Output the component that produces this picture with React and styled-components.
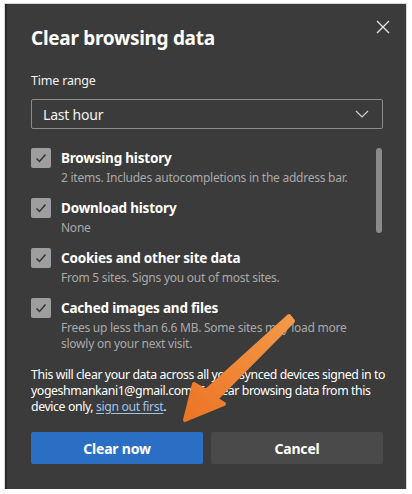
import React from "react";
import styled, { createGlobalStyle } from "styled-components";

const items = [
  { title: "Browsing history", desc: "2 items. Includes autocompletions in the address bar." },
  { title: "Download history", desc: "None" },
  { title: "Cookies and other site data", desc: "From 5 sites. Signs you out of most sites." },
  {
    title: "Cached images and files",
    desc: "Frees up less than 6.6 MB. Some sites may load more slowly on your next visit.",
  },
];

const Check = () => (
  <svg width="14" height="14" viewBox="0 0 14 14">
    <path d="M2.5 7.5 L5.5 10.5 L11.5 3.5" fill="none" stroke="#333" strokeWidth="1.5" />
  </svg>
);

const App = () => {
  return (
    <>
      <GlobalStyle />
      <Dialog>
        <Close aria-label="close">
          <svg width="14" height="14" viewBox="0 0 14 14">
            <path d="M1 1 L13 13 M13 1 L1 13" stroke="#e6e6e6" strokeWidth="1.3" />
          </svg>
        </Close>
        <Title>Clear browsing data</Title>
        <Label>Time range</Label>
        <Select>
          <span>Last hour</span>
          <svg width="14" height="8" viewBox="0 0 14 8">
            <path d="M1 1 L7 7 L13 1" fill="none" stroke="#d0d0d0" strokeWidth="1.2" />
          </svg>
        </Select>
        <ListWrap>
          <List>
            {items.map((it) => (
              <Row key={it.title}>
                <Box>
                  <Check />
                </Box>
                <RowText>
                  <RowTitle>{it.title}</RowTitle>
                  <RowDesc>{it.desc}</RowDesc>
                </RowText>
              </Row>
            ))}
          </List>
          <Scrollbar />
        </ListWrap>
        <Note>
          This will clear your data across all your synced devices signed in to
          yogeshmankani1@gmail.com. To clear browsing data from this device only,{" "}
          <NoteLink href="#">sign out first</NoteLink>.
        </Note>
        <Buttons>
          <Button $primary>Clear now</Button>
          <Button>Cancel</Button>
        </Buttons>
        <Arrow width="412" height="494" viewBox="0 0 412 494">
          <defs>
            <linearGradient id="og" x1="1" y1="0" x2="0" y2="1">
              <stop offset="0" stopColor="#f39a4a" />
              <stop offset="1" stopColor="#ec7424" />
            </linearGradient>
          </defs>
          <path
            d="M287 316 L291 321 L214 399 L222 404 L183 420 L192 384 L204 391 Z"
            fill="url(#og)"
            stroke="url(#og)"
            strokeWidth="4"
            strokeLinejoin="round"
          />
        </Arrow>
      </Dialog>
    </>
  );
};

export default App;

const GlobalStyle = createGlobalStyle`
  html, body {
    margin: 0;
    padding: 0;
    background: #ffffff;
  }
  body {
    font-family: "Noto Sans", "Open Sans", sans-serif;
  }
`;

const Dialog = styled.div`
  position: relative;
  box-sizing: border-box;
  width: 401px;
  height: 485px;
  margin: 4px 0 0 5px;
  background: #3b3b3b;
  border-left: 2px solid #2a2a2a;
  box-shadow: 0 0 0 1px #d8d8d8;
  padding: 21px 23px 0 24px;
  display: flex;
  flex-direction: column;
  color: #ffffff;
`;

const Close = styled.div`
  position: absolute;
  top: 10px;
  right: 13px;
  width: 14px;
  height: 14px;
  padding: 3px;
`;

const Title = styled.h1`
  margin: 0;
  font-size: 19px;
  font-weight: 700;
  line-height: 26px;
  letter-spacing: -0.3px;
`;

const Label = styled.div`
  margin-top: 22px;
  font-size: 12.5px;
  line-height: 16px;
  letter-spacing: -0.2px;
  color: #f0f0f0;
`;

const Select = styled.div`
  margin-top: 10px;
  height: 30px;
  box-sizing: border-box;
  border: 1.5px solid #8c8c8c;
  border-radius: 2px;
  display: flex;
  align-items: center;
  justify-content: space-between;
  padding: 0 13px 0 11px;
  font-size: 14px;
  letter-spacing: -0.2px;
  color: #f4f4f4;
`;

const ListWrap = styled.div`
  margin-top: 19px;
  display: flex;
  justify-content: space-between;
`;

const List = styled.div`
  display: flex;
  flex-direction: column;
  gap: 12px;
`;

const Row = styled.div`
  display: flex;
  gap: 10px;
`;

const Box = styled.div`
  flex: none;
  width: 20px;
  height: 20px;
  border-radius: 2px;
  background: #9e9e9e;
  display: flex;
  align-items: center;
  justify-content: center;
`;

const RowText = styled.div`
  display: flex;
  flex-direction: column;
  width: 290px;
`;

const RowTitle = styled.div`
  font-size: 13.5px;
  font-weight: 700;
  line-height: 20px;
  letter-spacing: -0.2px;
`;

const RowDesc = styled.div`
  margin-top: 2px;
  font-size: 12px;
  line-height: 16px;
  letter-spacing: -0.25px;
  color: #a9a9a9;
`;

const Scrollbar = styled.div`
  width: 6px;
  height: 85px;
  margin-right: 1px;
  border-radius: 3px;
  background: #8a8a8a;
`;

const Note = styled.p`
  margin: 15px -4px 0 0;
  font-size: 12.3px;
  line-height: 16px;
  letter-spacing: -0.4px;
  color: #ffffff;
`;

const NoteLink = styled.a`
  color: #9fc4ee;
  text-decoration: underline;
  text-underline-offset: 2px;
`;

const Buttons = styled.div`
  margin-top: 17px;
  display: grid;
  grid-template-columns: 1fr 1fr;
  gap: 8px;
`;

const Button = styled.button`
  height: 32px;
  border: none;
  border-radius: 2px;
  background: ${(p) => (p.$primary ? "#2b6fc4" : "#4a4a4a")};
  color: #ffffff;
  font-family: "Noto Sans", sans-serif;
  font-size: 14px;
  font-weight: 700;
  letter-spacing: -0.2px;
`;

const Arrow = styled.svg`
  position: absolute;
  top: -4px;
  left: -5px;
  pointer-events: none;
`;
